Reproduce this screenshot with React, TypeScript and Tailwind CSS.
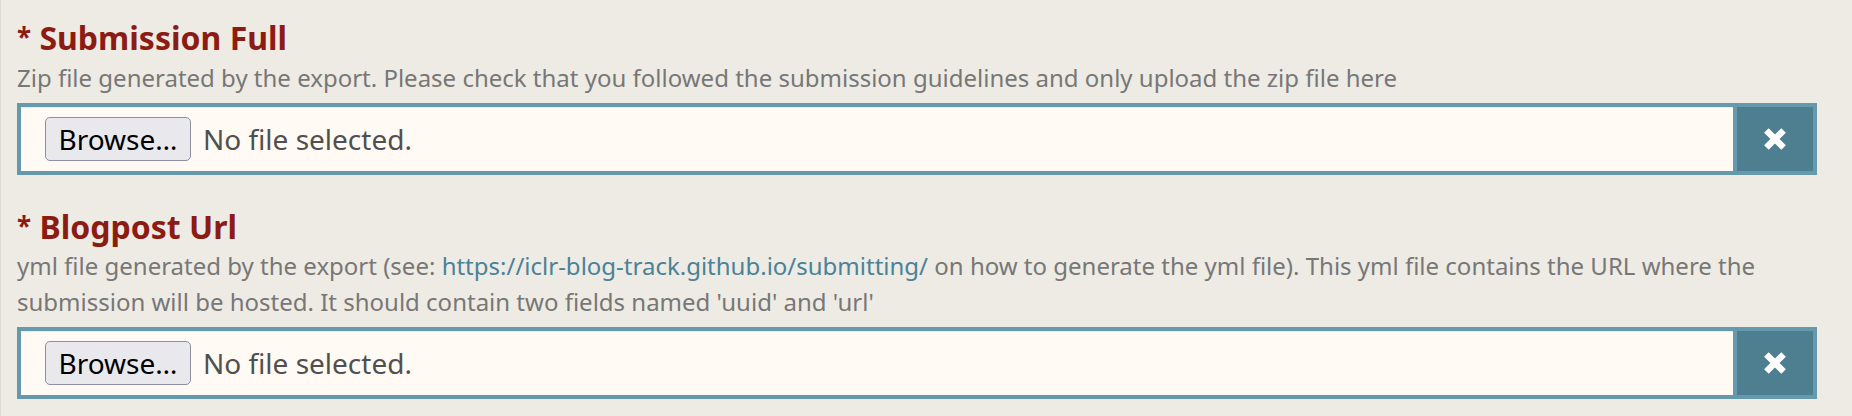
import React from "react";

function XIcon() {
  return (
    <svg width="22" height="22" viewBox="0 0 22 22" aria-hidden="true">
      <path d="M2.4 2.4 L19.6 19.6 M19.6 2.4 L2.4 19.6" stroke="#ffffff" strokeWidth="6.4" strokeLinecap="butt" fill="none" />
    </svg>
  );
}

function FileBox() {
  return (
    <div className="mt-[7px] flex h-[72px] w-[1800px] border-4 border-[#6599ae]">
      <div className="flex flex-1 items-center bg-[#fffaf3] pl-[24px] shadow-[inset_0_1px_1px_rgba(0,0,0,0.075)]">
        <button
          type="button"
          className="flex h-[44px] w-[146px] items-center justify-center rounded-[5px] border border-[#8f8f9d] bg-[#e9e9ed] text-[28px] leading-none text-black"
        >
          Browse…
        </button>
        <span className="ml-[12px] text-[28px] leading-none text-[#505050]">No file selected.</span>
      </div>
      <button type="button" className="flex w-[80px] items-center justify-center border-l-4 border-[#6599ae] bg-[#4e7f91]">
        <XIcon />
      </button>
    </div>
  );
}

export default function App() {
  return (
    <div
      className="min-h-[416px] w-[1852px] border-l border-[#dedbd3] bg-[#eeebe4] pl-[16px] pt-[17px]"
      style={{ fontFamily: '"Noto Sans", "Open Sans", sans-serif' }}
    >
      <div>
        <h2 className="text-[32px] font-bold leading-[40px] text-[#8c1c13]">
          <span className="text-[26px] align-[3px]">*</span> Submission Full
        </h2>
        <p className="mt-[2px] text-[24px] leading-[36px] text-[#777777]">
          Zip file generated by the export. Please check that you followed the submission guidelines and only upload the zip file here
        </p>
        <FileBox />
      </div>
      <div className="mt-[31px]">
        <h2 className="text-[32px] font-bold leading-[40px] text-[#8c1c13]">
          <span className="text-[26px] align-[3px]">*</span> Blogpost Url
        </h2>
        <p className="mt-[1px] w-[1800px] text-[24px] leading-[36px] text-[#777777]">
          yml file generated by the export (see:{" "}
          <a href="#" className="text-[#4a8297]">https://iclr-blog-track.github.io/submitting/</a> on how to generate the yml
          file). This yml file contains the URL where the submission will be hosted. It should contain two fields named 'uuid'
          and 'url'
        </p>
        <FileBox />
      </div>
    </div>
  );
}
